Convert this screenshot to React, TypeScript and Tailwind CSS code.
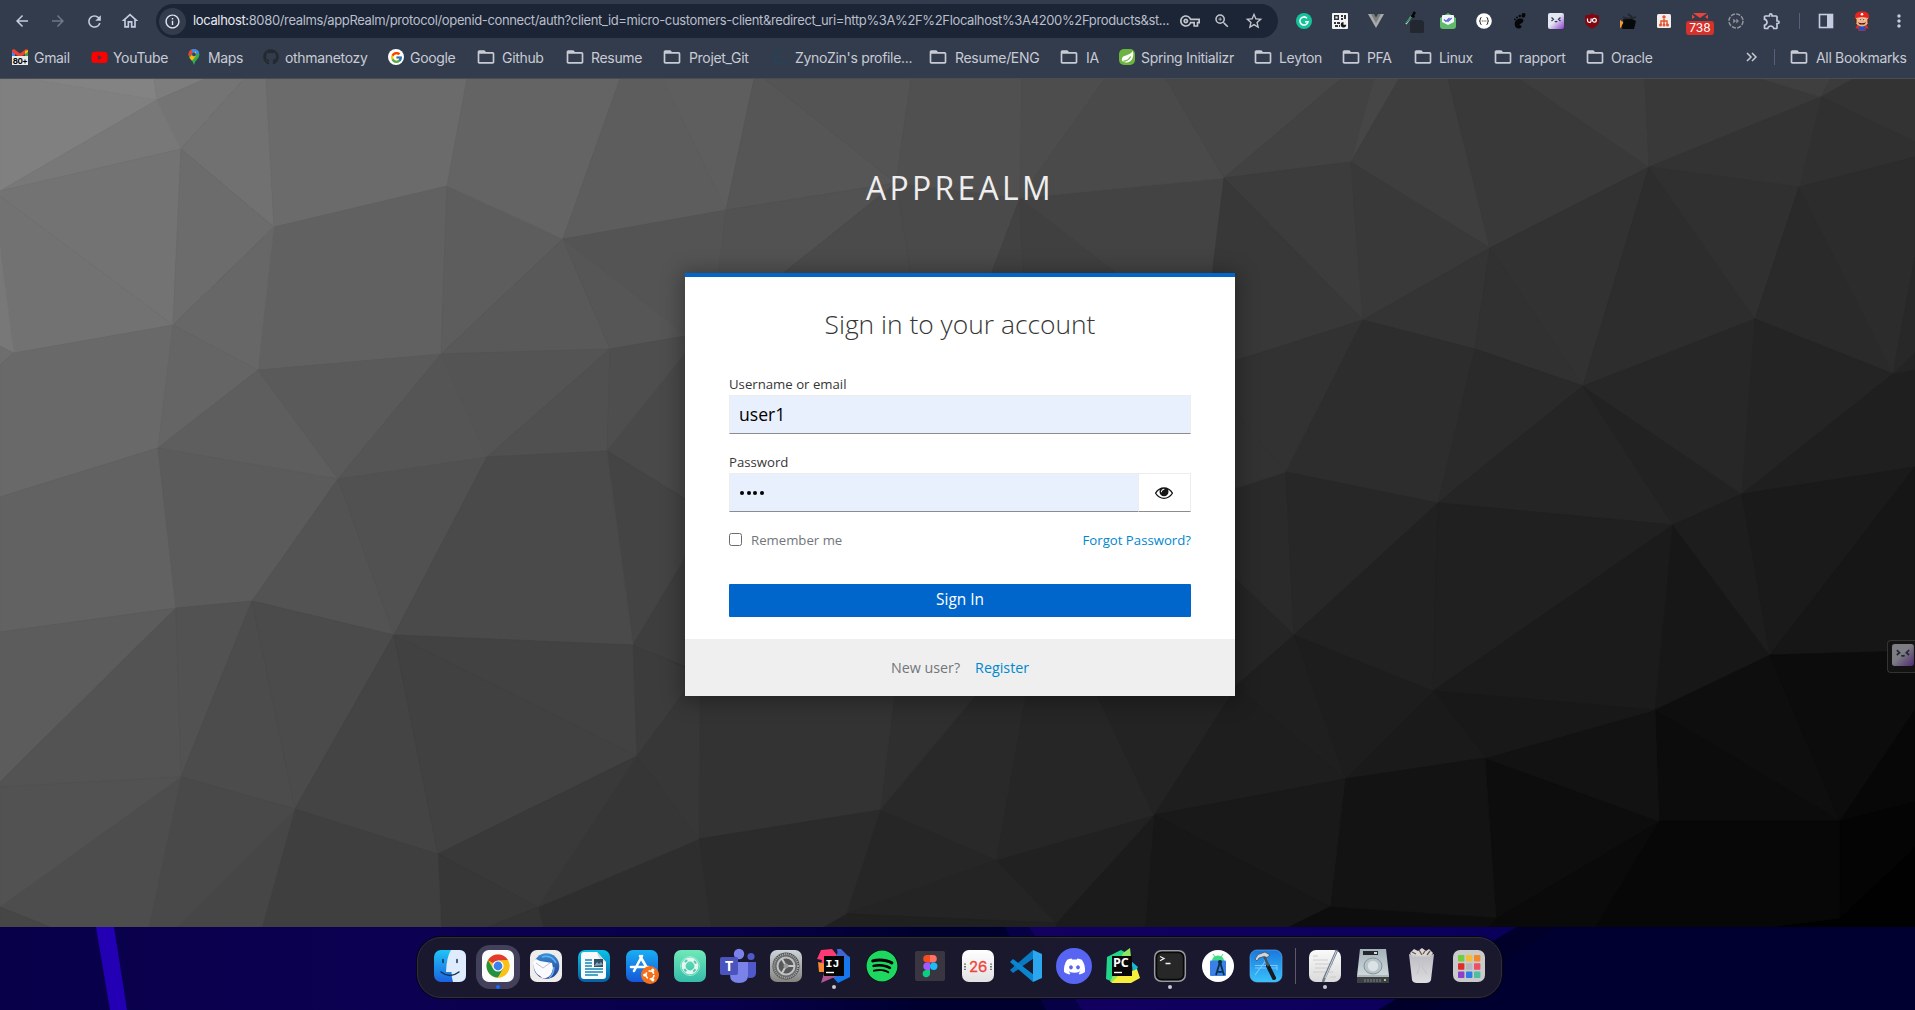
import React from "react";
import { FaDiscord, FaGithub, FaSpotify, FaYoutube } from "react-icons/fa";
import { FcGoogle } from "react-icons/fc";
import {
  MdArrowBack,
  MdArrowForward,
  MdFolderOpen,
  MdInfoOutline,
  MdMoreVert,
  MdOutlineExtension,
  MdOutlineHome,
  MdOutlineVpnKey,
  MdRefresh,
  MdStarBorder,
  MdZoomIn,
} from "react-icons/md";

/* ---------- low-poly backdrop: [grey level, polygon points] ---------- */
const FACES: [number, string][] = [
  [128, "0,79 31,79 157,100 0,191"],
  [131, "31,79 154,79 157,100"],
  [125, "154,79 205,79 157,100"],
  [116, "157,100 205,79 244,79 181,149"],
  [120, "0,191 157,100 181,149"],
  [115, "0,191 181,149 173,325 0,196"],
  [114, "0,196 173,325 14,353 0,247"],
  [120, "0,247 14,353 0,346"],
  [110, "0,346 14,353 0,365"],
  [113, "181,149 244,79 266,79 274,227"],
  [108, "181,149 274,227 173,325"],
  [107, "274,227 266,79 467,79 447,186"],
  [97, "274,227 447,186 441,354 258,370"],
  [93, "447,186 563,239 441,354"],
  [100, "447,186 467,79 620,79 563,239"],
  [93, "563,239 620,79 663,79 726,210"],
  [94, "726,210 663,79 754,79"],
  [86, "726,210 754,79 765,79 896,183"],
  [84, "765,79 911,79 896,183"],
  [103, "173,325 274,227 258,370"],
  [105, "0,365 14,353 173,325 158,448 0,497"],
  [101, "173,325 258,370 158,448"],
  [94, "158,448 258,370 338,479"],
  [90, "258,370 441,354 338,479"],
  [89, "563,239 441,354 610,349"],
  [86, "563,239 610,349 720,330"],
  [84, "563,239 726,210 718,360"],
  [82, "726,210 896,183 700,340 715,300"],
  [75, "896,183 700,340 920,330"],
  [74, "896,183 1020,198 970,330 920,330"],
  [80, "896,183 911,79 1022,79 1020,198"],
  [77, "1020,198 1022,79 1105,79"],
  [66, "1020,198 970,330 1025,330"],
  [64, "1020,198 1025,330 1190,330"],
  [67, "1020,198 1224,178 1235,353 1190,330"],
  [74, "1020,198 1105,79 1166,79 1224,178"],
  [71, "1166,79 1341,79 1224,178"],
  [66, "1224,178 1341,79 1374,79 1351,162"],
  [70, "1374,79 1399,79 1351,162"],
  [62, "1351,162 1399,79 1448,79 1490,248"],
  [57, "1448,79 1520,79 1649,167 1490,248"],
  [61, "1520,79 1645,79 1649,167"],
  [57, "1645,79 1762,79 1821,97 1649,167"],
  [63, "1762,79 1831,79 1821,97"],
  [59, "1831,79 1853,79 1821,97"],
  [51, "1821,97 1853,79 1915,79 1915,142"],
  [48, "1821,97 1915,142 1915,157 1799,187"],
  [51, "1649,167 1821,97 1799,187"],
  [60, "1224,178 1351,162 1363,320"],
  [57, "1351,162 1490,248 1363,320"],
  [56, "1224,178 1363,320 1200,372"],
  [50, "1200,372 1363,320 1286,472"],
  [52, "1490,248 1363,320 1475,349"],
  [49, "1490,248 1475,349 1583,386"],
  [50, "1490,248 1649,167 1583,386"],
  [45, "1649,167 1583,386 1755,319"],
  [48, "1649,167 1799,187 1755,319"],
  [42, "1799,187 1755,319 1893,374"],
  [44, "1799,187 1915,157 1915,257 1893,374"],
  [40, "1915,257 1893,374 1915,352"],
  [36, "1893,374 1915,352 1915,370"],
  [45, "1363,320 1475,349 1438,503 1286,472"],
  [42, "1475,349 1583,386 1438,503"],
  [37, "1583,386 1438,503 1673,525"],
  [34, "1583,386 1673,525 1742,494"],
  [39, "1583,386 1755,319 1742,494"],
  [36, "1755,319 1742,494 1893,374"],
  [31, "1893,374 1915,370 1915,467 1742,494"],
  [42, "1200,500 1286,472 1294,635 1200,545"],
  [50, "1200,372 1286,472 1200,500"],
  [39, "1286,472 1438,503 1294,635"],
  [33, "1438,503 1294,635 1433,691"],
  [32, "1438,503 1673,525 1433,691"],
  [27, "1673,525 1433,691 1655,710"],
  [23, "1673,525 1770,655 1655,710"],
  [29, "1673,525 1742,494 1770,655"],
  [26, "1742,494 1915,467 1770,655"],
  [22, "1915,467 1770,655 1915,651"],
  [14, "1655,710 1770,655 1840,821"],
  [12, "1655,710 1840,821 1659,821"],
  [12, "1770,655 1915,651 1915,710 1840,821"],
  [7, "1915,710 1840,821 1915,802"],
  [4, "1840,821 1915,802 1915,848 1840,918"],
  [1, "1840,918 1915,848 1915,927 1770,927"],
  [7, "1659,821 1840,821 1840,918 1770,927 1595,927"],
  [10, "1659,821 1595,927 1488,927 1496,918"],
  [13, "1485,758 1659,821 1496,918"],
  [18, "1485,758 1655,710 1659,821"],
  [24, "1433,691 1655,710 1485,758"],
  [26, "1433,691 1485,758 1345,779"],
  [29, "1294,635 1433,691 1345,779"],
  [37, "1200,545 1294,635 1236,686 1200,730"],
  [31, "1294,635 1236,686 1345,779"],
  [30, "1236,686 1345,779 1154,815"],
  [19, "1345,779 1485,758 1496,918 1330,907"],
  [25, "1345,779 1154,815 1330,907"],
  [23, "1154,815 1330,907 1289,927 1145,927"],
  [13, "1330,907 1496,918 1488,927 1289,927"],
  [27, "1154,815 1056,923 1056,927 1145,927"],
  [33, "1154,815 996,860 1056,923"],
  [38, "1027,686 1093,686 1154,815 996,860"],
  [35, "1093,686 1236,686 1154,815"],
  [41, "880,810 975,690 1027,686 996,860"],
  [38, "880,810 996,860 846,914"],
  [36, "996,860 1056,923 846,914"],
  [32, "846,914 1056,923 1056,927 823,927"],
  [47, "895,690 980,690 880,810"],
  [51, "700,690 895,690 880,810 699,839"],
  [43, "699,839 880,810 846,914 823,927 711,927"],
  [46, "699,839 711,927 543,927 538,907"],
  [85, "338,479 441,354 487,457"],
  [84, "441,354 610,349 487,457"],
  [80, "610,349 487,457 607,451"],
  [78, "610,349 720,330 607,451"],
  [73, "607,451 720,310 720,520"],
  [68, "607,451 720,520 633,645"],
  [62, "633,645 720,500 720,680"],
  [98, "0,497 158,448 176,608 0,632"],
  [91, "158,448 338,479 252,601 176,608"],
  [83, "338,479 252,601 394,635"],
  [81, "338,479 487,457 394,635"],
  [74, "487,457 607,451 633,645 394,635"],
  [92, "176,608 0,632 0,782"],
  [83, "176,608 0,782 0,787 181,777"],
  [82, "176,608 252,601 181,777"],
  [76, "252,601 181,777 295,809"],
  [75, "252,601 394,635 295,809"],
  [68, "394,635 295,809 438,854"],
  [65, "394,635 438,854 637,756"],
  [66, "394,635 633,645 637,756"],
  [60, "633,645 700,675 637,756"],
  [55, "637,756 700,670 699,839"],
  [54, "637,756 699,839 538,907"],
  [57, "438,854 637,756 538,907"],
  [55, "438,854 538,907 488,927 441,927"],
  [51, "538,907 543,927 488,927"],
  [63, "295,809 438,854 441,927 262,927"],
  [70, "295,809 262,927 177,927"],
  [73, "181,777 295,809 177,927 149,927"],
  [77, "181,777 149,927 50,927 0,907"],
  [82, "181,777 0,787 0,907"],
  [70, "0,907 50,927 0,927"],
];

function Backdrop() {
  return (
    <svg className="absolute inset-0" width="1915" height="848" viewBox="0 79 1915 848" aria-hidden="true">
      <rect x="0" y="79" width="1915" height="848" fill="#383838" />
      {FACES.map(([g, p], i) => (
        <polygon key={i} points={p} fill={`rgb(${g},${g},${g})`} stroke={`rgb(${g},${g},${g})`} strokeWidth="0.7" />
      ))}
    </svg>
  );
}

/* ---------- browser chrome ---------- */
function Cell({ children }: { children: React.ReactNode }) {
  return <div className="relative flex h-[34px] w-9 shrink-0 items-center justify-center">{children}</div>;
}

function GhostFace({ id }: { id: string }) {
  return (
    <svg width="16" height="16" viewBox="0 0 16 16">
      <defs>
        <linearGradient id={id} x1="0" y1="0" x2="1" y2="1">
          <stop offset="0.45" stopColor="#e4e8f2" />
          <stop offset="1" stopColor="#8d3fd0" />
        </linearGradient>
      </defs>
      <rect width="16" height="16" rx="2" fill={`url(#${id})`} />
      <path d="M3.5 4.5 5.5 6.3 3.5 8M12.5 4.5 10.5 6.3 12.5 8M6.8 8.2q1.2 1 2.4 0" stroke="#333b52" strokeWidth="1.2" fill="none" />
    </svg>
  );
}

function Extensions() {
  return (
    <div className="ml-[8px] flex items-center">
      <Cell>
        <svg width="16" height="16" viewBox="0 0 16 16">
          <circle cx="8" cy="8" r="8" fill="#15c39a" />
          <path d="M11 5.2A4.1 4.1 0 1 0 12 8.8H9" stroke="#fff" strokeWidth="1.5" fill="none" />
        </svg>
      </Cell>
      <Cell>
        <svg width="16" height="16" viewBox="0 0 16 16">
          <rect width="16" height="16" rx="1" fill="#f3f3f3" />
          <path d="M2 2h5v5H2zM3.4 3.4h2.2v2.2H3.4z" fill="#30343c" fillRule="evenodd" />
          <path d="M9 2h2v2H9zM12 2h2v4h-2zM9 5h2v2H9zM2 9h2v2H2zM5 9h3v2H5zM3 12h3v2H3zM7 12h1v2H7z" fill="#30343c" />
          <path d="M11.5 9a2.7 2.7 0 1 0 2.7 2.7h-2.7z" fill="#16191f" />
        </svg>
      </Cell>
      <Cell>
        <svg width="16" height="14" viewBox="0 0 16 14">
          <path d="M0 0h16L8 14z" fill="#a9a9a9" /><path d="M3 0h10L8 9z" fill="#7c7e81" /><path d="M6 0h4L8 3.5z" fill="#333c4d" />
        </svg>
      </Cell>
      <Cell>
        <svg className="ml-1" width="22" height="24" viewBox="0 0 22 24">
          <path d="M3 15 10 5" stroke="#dfe4e4" strokeWidth="1.4" />
          <path d="M3 14 9 7" stroke="#218a55" strokeWidth="1.2" />
          <path d="m8.5 6 3 2M8.5 8l3.5-5" stroke="#050505" strokeWidth="2.6" />
          <rect x="7" y="11" width="14" height="14" rx="3.5" fill="#23272f" />
        </svg>
      </Cell>
      <Cell>
        <svg width="16" height="16" viewBox="0 0 16 16">
          <path d="M0 5 8 0l8 5v8q0 3-3 3H3q-3 0-3-3z" fill="#5fbb6b" />
          <path d="M2 3q0-1 1-1h10q1 0 1 1v6l-6 3-6-3z" fill="#f4f5fb" />
          <path d="m4 6.5 2 2L9.5 5M7.5 8 8 8.5 11.7 5" stroke="#4f62d8" strokeWidth="1.2" fill="none" />
        </svg>
      </Cell>
      <Cell>
        <svg width="16" height="16" viewBox="0 0 16 16">
          <circle cx="8" cy="8" r="7.8" fill="#fff" />
          <path d="M5.5 4.5Q4 4.5 4.3 6.2 4.5 8 3.3 8 4.5 8 4.3 9.8 4 11.5 5.5 11.5M10.5 4.5Q12 4.5 11.7 6.2 11.5 8 12.7 8 11.5 8 11.7 9.8 12 11.5 10.5 11.5" stroke="#222" fill="none" />
          <path d="M5.8 8h.9M7.6 8h.9M9.4 8h.9" stroke="#222" />
        </svg>
      </Cell>
      <Cell>
        <svg width="14" height="16" viewBox="0 0 14 16" fill="#050608">
          <path d="M8 5.5C4 5.5 1.5 8 1.7 11.5 1.9 14.5 4 16 6.5 15.5 9 15 9 12.7 7.3 12.3 6 12 6.5 11 8 10.5 11 9.5 11.5 5.5 8 5.5Z" />
          <ellipse cx="10.5" cy="2.3" rx="1.9" ry="2.4" transform="rotate(15 10.5 2.3)" />
          <circle cx="6.8" cy="3" r="1.2" /><circle cx="4" cy="4.4" r="1" /><circle cx="1.9" cy="6.4" r=".9" />
        </svg>
      </Cell>
      <Cell><GhostFace id="ghost-toolbar" /></Cell>
      <Cell>
        <svg width="16" height="16" viewBox="0 0 16 16">
          <path d="M8 .5Q11 2.5 15 2.5V8q0 4.5-7 7.8Q1 12.5 1 8V2.5Q5 2.5 8 .5Z" fill="#800610" />
          <path d="M3.5 5.5v2.3q0 1.5 1.8 1.5T7.1 7.8V5.5" stroke="#fff" strokeWidth="1.2" fill="none" />
          <circle cx="10.4" cy="7.3" r="1.9" stroke="#fff" strokeWidth="1.2" fill="none" />
        </svg>
      </Cell>
      <Cell>
        <svg width="18" height="16" viewBox="0 0 18 16">
          <path d="m1 7 6 4-6 4z" fill="#f59a2b" />
          <path d="M4 6q4 1 7-1l6 3-2 8H4q-2-1-1-4 2-2 1-6z" fill="#08090b" />
          <path d="M4 4q5 3 13 0M9 1l4 3" stroke="#24272c" strokeWidth="1.6" fill="none" />
        </svg>
      </Cell>
      <Cell>
        <svg width="14" height="14" viewBox="0 0 14 14">
          <rect width="14" height="14" rx="1.5" fill="#f2eeec" />
          <circle cx="7" cy="3" r="1.7" fill="#e8512e" />
          <path d="M7 5v6M4 11V7h6v4" stroke="#e8512e" strokeWidth="1.4" fill="none" />
          <circle cx="3.5" cy="11" r="1.5" fill="#e8512e" /><circle cx="7" cy="11" r="1.5" fill="#e8512e" /><circle cx="10.5" cy="11" r="1.5" fill="#e8512e" />
        </svg>
      </Cell>
      <Cell>
        <svg width="16" height="16" viewBox="0 0 16 16" className="mb-1">
          <path d="M1 2h14L8 7z" fill="#ea4438" />
          <path d="M0 3.5 3 6 0 8zM16 3.5 13 6l3 2z" fill="#ea4438" />
        </svg>
        <span className="absolute left-1 top-[17px] flex h-[14px] w-[28px] items-center justify-center rounded-[3px] bg-[#d7312c] text-[12px] leading-none text-white">738</span>
      </Cell>
      <Cell>
        <svg width="16" height="16" viewBox="0 0 16 16" fill="none" stroke="#94979d">
          <circle cx="8" cy="8" r="7" strokeWidth="1.5" strokeDasharray="4.2 1.3" />
          <path d="m5.5 6 2.2 2-2.2 2zM8.5 6l2.2 2-2.2 2z" fill="#94979d" strokeWidth=".4" />
        </svg>
      </Cell>
      <Cell><MdOutlineExtension size={20} color="#c5cbe0" /></Cell>
      <div className="ml-[9px] mr-[8px] h-4 w-px bg-[#56607a]" />
      <Cell>
        <svg width="16" height="16" viewBox="0 0 16 16">
          <rect x="1.5" y="1.5" width="13" height="13" stroke="#c5cbe0" strokeWidth="1.6" fill="none" />
          <path d="M9 1.5h5.5v13H9z" fill="#c5cbe0" />
        </svg>
      </Cell>
      <Cell>
        <svg width="18" height="20" viewBox="0 0 18 20">
          <path d="M4 14h10l1.500 3.500h-3V20h-7v-2.500h-3z" fill="#e62420" />
          <path d="M6 15h6v4.500H6z" fill="#1f52c7" />
          <ellipse cx="9" cy="9.5" rx="6.6" ry="6" fill="#f2b287" />
          <path d="M1.800 7.500Q1 .3 9 .3t7.200 7.200Q9 4.500 1.800 7.500Z" fill="#e3241f" />
          <circle cx="9" cy="3.2" r="1.3" fill="#fff" />
          <path d="M2.800 8v4M15.200 8v4" stroke="#512711" strokeWidth="1.5" />
          <circle cx="7" cy="8.5" r="1.1" fill="#fff" /><circle cx="11" cy="8.5" r="1.1" fill="#fff" />
          <circle cx="7.2" cy="8.6" r=".7" fill="#124" /><circle cx="10.8" cy="8.6" r=".7" fill="#124" />
          <path d="M4.800 11.300q4.200 2 8.400 0l-2 2.200H6.800z" fill="#3e1a0c" />
        </svg>
      </Cell>
      <Cell><MdMoreVert size={20} color="#c5cbe0" className="ml-px" /></Cell>
    </div>
  );
}

function GmailIcon() {
  return (
    <span className="relative block h-4 w-4">
      <svg width="16" height="9" viewBox="0 0 16 9" className="block">
        <path d="M0 1h3v8H0z" fill="#4285f4" /><path d="M13 1h3v8h-3z" fill="#34a853" />
        <path d="m0 1 2-1 6 4.5L14 0l2 1v2L8 8.500 0 3z" fill="#ea4335" />
        <path d="m13 2 3-1v2l-3 2z" fill="#fbbc04" />
      </svg>
      <span className="absolute left-0 top-[7px] flex h-[9px] w-4 items-center justify-center bg-[#e9e9e9] text-[8px] font-bold leading-none tracking-[-0.5px] text-black">80+</span>
    </span>
  );
}

function MapsIcon() {
  return (
    <svg width="16" height="16" viewBox="0 0 16 16">
      <defs>
        <clipPath id="pin"><path d="M8 0a5.4 5.4 0 0 1 5.4 5.5C13.4 9.5 9.5 10.5 8 16 6.5 10.5 2.6 9.5 2.6 5.5A5.4 5.4 0 0 1 8 0Z" /></clipPath>
      </defs>
      <g clipPath="url(#pin)">
        <path d="M0 0h16v16H0z" fill="#34a853" />
        <path d="M0 8 9 0H0z" fill="#ea4335" /><path d="m5 0 11 0v3L8 6z" fill="#4285f4" />
        <path d="M2 10 10 2v5l-5 6z" fill="#fbbc04" /><path d="m0 3 4-3 3 4-5 5z" fill="#ea4335" />
      </g>
      <circle cx="8" cy="5.4" r="1.9" fill="#23477f" />
    </svg>
  );
}

const FolderIcon = () => <MdFolderOpen size={20} color="#c8cbd4" className="shrink-0" />;
const SpringIcon = () => (
  <span className="flex h-4 w-4 items-center justify-center rounded-[5px] bg-[#6db33f]">
    <svg width="13" height="13" viewBox="0 0 12 12"><path d="M11 0c1 4 0 10-5.500 10.500C2 11 0 9 1 6.500 2 3.500 8 4.500 11 0Z" fill="#fff" /><path d="M2 9.500Q7 9 9 5" stroke="#6db33f" fill="none" /></svg>
  </span>
);
const ProfileIcon = () => (
  <svg width="16" height="16" viewBox="0 0 16 16" fill="none" stroke="#24435a"><path d="M8 2H3v12h5M3 8h4M10 14h4" strokeWidth="1.4" /></svg>
);

const BOOKMARKS: { label: string; width: string; icon: React.ReactNode; gap: string }[] = [
  { label: "Gmail", width: "w-[79px]", icon: <GmailIcon />, gap: "gap-1.5" },
  { label: "YouTube", width: "w-[95px]", icon: <FaYoutube size={17} color="#f00" className="shrink-0" />, gap: "gap-1.5" },
  { label: "Maps", width: "w-[77px]", icon: <MapsIcon />, gap: "gap-1.5" },
  { label: "othmanetozy", width: "w-[125px]", icon: <FaGithub size={16} color="#24292f" />, gap: "gap-1.5" },
  { label: "Google", width: "w-[90px]", icon: <span className="flex h-4 w-4 items-center justify-center rounded-full bg-white"><FcGoogle size={13} /></span>, gap: "gap-1.5" },
  { label: "Github", width: "w-[89px]", icon: <FolderIcon />, gap: "gap-2" },
  { label: "Resume", width: "w-[97px]", icon: <FolderIcon />, gap: "gap-2" },
  { label: "Projet_Git", width: "w-[108px]", icon: <FolderIcon />, gap: "gap-[9px]" },
  { label: "ZynoZin's profile...", width: "w-[158px]", icon: <ProfileIcon />, gap: "gap-[7px]" },
  { label: "Resume/ENG", width: "w-[131px]", icon: <FolderIcon />, gap: "gap-[9px]" },
  { label: "IA", width: "w-[58px]", icon: <FolderIcon />, gap: "gap-[9px]" },
  { label: "Spring Initializr", width: "w-[136px]", icon: <SpringIcon />, gap: "gap-1.5" },
  { label: "Leyton", width: "w-[88px]", icon: <FolderIcon />, gap: "gap-2" },
  { label: "PFA", width: "w-[72px]", icon: <FolderIcon />, gap: "gap-2" },
  { label: "Linux", width: "w-[80px]", icon: <FolderIcon />, gap: "gap-2" },
  { label: "rapport", width: "w-[92px]", icon: <FolderIcon />, gap: "gap-2" },
  { label: "Oracle", width: "w-[90px]", icon: <FolderIcon />, gap: "gap-2" },
];

function Browser() {
  return (
    <header className="flex h-[79px] shrink-0 flex-col border-b border-[#4a4d54] bg-[#333c4d] pt-1 font-[Inter,sans-serif] text-[#c8cbd4]">
      <div className="flex h-[34px] items-center pl-1">
        <Cell><MdArrowBack size={18} color="#c5cbe0" /></Cell>
        <Cell><MdArrowForward size={18} color="#6f7788" /></Cell>
        <Cell><MdRefresh size={19} color="#c5cbe0" /></Cell>
        <Cell><MdOutlineHome size={20} color="#c5cbe0" /></Cell>
        <div className="ml-[8px] flex h-[34px] w-[1122px] shrink-0 items-center rounded-full bg-[#1c2536] pl-[3px]">
          <span className="flex h-[27px] w-[27px] items-center justify-center rounded-full bg-[#333c4d]">
            <MdInfoOutline size={17} color="#e3e6ee" />
          </span>
          <span className="ml-[7px] w-[982px] whitespace-nowrap text-[13px] tracking-[-0.36px] text-[#b9bfca]">
            <span className="text-[#e6e9f0]">localhost:</span>8080/realms/appRealm/protocol/openid-connect/auth?client_id=micro-customers-client&amp;redirect_uri=http%3A%2F%2Flocalhost%3A4200%2Fproducts&amp;st...
          </span>
          <div className="ml-[5px] flex items-center gap-[13px] text-[#c3c6cd]">
            <MdOutlineVpnKey size={20} />
            <MdZoomIn size={18} />
            <MdStarBorder size={20} />
          </div>
        </div>
        <Extensions />
      </div>
      <nav className="flex h-[38px] items-center whitespace-nowrap pl-3 text-[14px] tracking-[-0.32px]">
        {BOOKMARKS.map((b) => (
          <div key={b.label} className={`flex shrink-0 items-center ${b.width} ${b.gap}`}>
            <span className="flex w-4 shrink-0 justify-center">{b.icon}</span>
            <span>{b.label}</span>
          </div>
        ))}
        <svg className="ml-[69px]" width="11" height="10" viewBox="0 0 11 10" fill="none" stroke="#c8cbd4" strokeWidth="1.5"><path d="m1 1 4 4-4 4M6 1l4 4-4 4" /></svg>
        <div className="ml-[17px] h-4 w-px bg-[#56607a]" />
        <div className="ml-4 flex items-center gap-[9px]">
          <span className="flex w-4 shrink-0 justify-center"><FolderIcon /></span>
          <span>All Bookmarks</span>
        </div>
      </nav>
    </header>
  );
}

/* ---------- sign-in form ---------- */
function LoginCard() {
  return (
    <section className="flex w-[550px] flex-col border-t-4 border-[#0066cc] bg-white shadow-[0_2px_20px_3px_rgba(0,0,0,0.32)]">
      <h1 className="mt-[29px] text-center text-[26.4px] font-light leading-9 text-[#363636]">Sign in to your account</h1>
      <form className="mt-[33px] flex flex-col px-[44px]">
        <label className="mb-[2px] text-[13.2px] leading-[18px] text-[#363636]">Username or email</label>
        <div className="flex h-[39px] items-center border border-[#ededed] border-b-[#8a8d90] bg-[#e8effd] px-[9px] text-[17.6px] text-black">user1</div>
        <label className="mb-[2px] mt-[19px] text-[13.2px] leading-[18px] text-[#363636]">Password</label>
        <div className="flex h-[39px]">
          <div className="flex flex-1 items-center gap-[2.6px] border border-r-0 border-[#ededed] border-b-[#8a8d90] bg-[#e8effd] pl-[10px]">
            <i className="h-[4px] w-[4px] rounded-full bg-black" />
            <i className="h-[4px] w-[4px] rounded-full bg-black" />
            <i className="h-[4px] w-[4px] rounded-full bg-black" />
            <i className="h-[4px] w-[4px] rounded-full bg-black" />
          </div>
          <div className="flex w-[53px] items-center justify-center border border-[#ededed] border-b-[#8a8d90] pr-px">
            <svg width="18" height="13" viewBox="0 0 1792 1280" fill="#151515">
              <path d="M1664 704q-152-236-381-353 61 104 61 225 0 185-131.500 316.500T896 1024 579.500 892.500 448 576q0-121 61-225-229 117-381 353 133 205 333.500 326.500T896 1152t434.500-121.500T1664 704zM944 320q0-20-14-34t-34-14q-125 0-214.500 89.500T592 576q0 20 14 34t34 14 34-14 14-34q0-86 61-147t147-61q20 0 34-14t14-34zM1792 704q0 34-20 69-140 230-376.500 368.500T896 1280 396.500 1141 20 773Q0 738 0 704t20-69q140-229 376.500-368T896 128t499.500 139T1772 635q20 35 20 69z" />
            </svg>
          </div>
        </div>
        <div className="mb-px mt-[18px] flex items-center justify-between text-[13.2px] leading-5">
          <span className="flex items-center gap-[9px] text-[#72767b]">
            <span className="mb-px h-[13px] w-[13px] rounded-[2.5px] border border-[#6b6b6b] bg-white" />
            Remember me
          </span>
          <a className="text-[#0088ce]">Forgot Password?</a>
        </div>
        <div className="mt-[33px] flex h-[33px] justify-center rounded-[1px] bg-[#0066cc] pt-1 text-[15.4px] leading-6 text-white">Sign In</div>
      </form>
      <footer className="mt-[22px] flex h-[57px] items-center justify-center gap-[15px] bg-[#efefef] text-[14.3px]">
        <span className="text-[#72767b]">New user?</span>
        <a className="text-[#0088ce]">Register</a>
      </footer>
    </section>
  );
}

/* ---------- dock ---------- */
function Tile({ children, dot }: { children: React.ReactNode; dot?: string }) {
  return (
    <div className="relative flex h-full w-12 shrink-0 items-center justify-center">
      {children}
      {dot && <span className={`absolute bottom-[8px] left-[22px] z-10 h-1 w-1 rounded-full ${dot}`} />}
    </div>
  );
}

function Icon({ children }: { children: React.ReactNode }) {
  return <svg width="36" height="36" viewBox="0 0 36 36" className="relative mb-[3px] overflow-visible">{children}</svg>;
}

function Gradient({ id, from, to }: { id: string; from: string; to: string }) {
  return (
    <defs>
      <linearGradient id={id} x1="0" y1="0" x2="0" y2="1"><stop stopColor={from} /><stop offset="1" stopColor={to} /></linearGradient>
    </defs>
  );
}

const PAD_COLORS = ["#6fcf3f", "#f4bd35", "#f08a2c", "#dc2f2a", "#b5b8bf", "#ee4e68", "#8b40c9", "#2d7be8", "#4cc0a0"];

function Dock() {
  return (
    <div className="relative flex h-[61px] items-center rounded-[24px] border border-[#302e3a] bg-[#1b192c]/95 px-2 shadow-[0_0_0_1px_#07060f]">
      <Tile>
        <Icon>
          <Gradient id="finder" from="#20c4f8" to="#1b62e0" />
          <rect x="2" y="2" width="32" height="32" rx="7" fill="url(#finder)" />
          <path d="M19 2h8q7 0 7 7v18q0 7-7 7h-6q-1.5-5-1.5-10H14Q14.5 9 19 2Z" fill="#dfecfd" />
          <path d="M11 11.5v3M25 11.5v3M9 24q9 7 18 0" stroke="#143251" strokeWidth="1.5" fill="none" strokeLinecap="round" />
        </Icon>
      </Tile>
      <Tile dot="bg-[#1769ff]">
        <span className="absolute left-[2px] top-[7px] h-11 w-11 rounded-[14px] bg-[#42405a]" />
        <Icon>
          <rect x="2" y="2" width="32" height="32" rx="7" fill="#fbfcfd" />
          <circle cx="18" cy="18" r="11.5" fill="#fbc116" />
          <path d="M18 18 8 12.3A11.5 11.5 0 0 1 28 12.3H18z" fill="#e33b2e" />
          <path d="M8 12.3A11.5 11.5 0 0 0 18 29.5L23 21 18 18 13 20.5z" fill="#229342" />
          <path d="M28 12.3A11.5 11.5 0 0 1 18 29.5L23 21 22 12.3z" fill="#fbc116" />
          <circle cx="18" cy="18" r="5.6" fill="#fff" /><circle cx="18" cy="18" r="4.4" fill="#3b82ec" />
        </Icon>
      </Tile>
      <Tile>
        <Icon>
          <Gradient id="bird" from="#3a8fd6" to="#27358f" />
          <rect x="2" y="2" width="32" height="32" rx="7" fill="#eeedec" />
          <circle cx="18.5" cy="18" r="12.8" fill="url(#bird)" />
          <path d="m5 14 3-3 4 2 12 2 1 5q-1 8-7 10-4 1-6-2-5-3-6-8z" fill="#fbfbff" />
          <path d="m8 15 7 5 7-5" stroke="#b9c2da" fill="none" />
          <path d="M14 9q9-3 14 6M21 30q5-4 5-11" stroke="#5fb4f0" strokeWidth="1.5" fill="none" />
        </Icon>
      </Tile>
      <Tile>
        <Icon>
          <Gradient id="writer" from="#08c3e8" to="#0860a5" />
          <rect x="2" y="2" width="32" height="32" rx="7" fill="url(#writer)" />
          <path d="M8 4h13l9 10v14q0 3-3 3H8q-3 0-3-3V7q0-3 3-3Z" fill="#f8f9fa" />
          <path d="M21 4q1 8 9 10z" fill="#d2d7da" />
          <path d="M9 12h7M9 15h7M9 18h7M9 21h18M9 24h18M9 27h13" stroke="#1585b8" strokeWidth="1.6" />
          <path d="M18 11h9v8h-9z" fill="#304f64" /><path d="m18 18 3-4 2 2 2-2 2 3" fill="#7fa5b7" />
        </Icon>
      </Tile>
      <Tile>
        <Icon>
          <Gradient id="store" from="#19aef3" to="#1656d9" />
          <rect x="2" y="2" width="32" height="32" rx="7" fill="url(#store)" />
          <path d="m18 8-8 15M16 8l7 12M7 19h17" stroke="#fff" strokeWidth="2.6" strokeLinecap="round" />
          <circle cx="26" cy="27" r="9" fill="#f3701b" />
          <g fill="none" stroke="#fff" strokeWidth="1.6">
            <circle cx="26" cy="27" r="4" strokeDasharray="6.4 2" /><circle cx="20.7" cy="27" r=".8" /><circle cx="28.8" cy="22.2" r=".8" /><circle cx="28.8" cy="31.8" r=".8" />
          </g>
        </Icon>
      </Tile>
      <Tile>
        <Icon>
          <Gradient id="help" from="#70e9b8" to="#35bba9" />
          <rect x="2" y="2" width="32" height="32" rx="7" fill="url(#help)" />
          <circle cx="18" cy="18" r="9.5" stroke="#8eeed0" fill="none" />
          <circle cx="18" cy="18" r="6.4" stroke="#e6f5ef" strokeWidth="4" fill="none" />
          <circle cx="18" cy="18" r="6.4" stroke="#51c9ae" strokeWidth="2" fill="none" strokeDasharray="3 7.053" strokeDashoffset="-3.5" />
        </Icon>
      </Tile>
      <Tile>
        <Icon>
          <circle cx="19" cy="6" r="5.2" fill="#7b83eb" /><circle cx="31" cy="8.5" r="3.6" fill="#5059c9" />
          <path d="M25 14h11v11q0 5-6 5-5 0-5-5z" fill="#5059c9" />
          <path d="M10 14h18v13q0 8-9 8t-9-8z" fill="#7b83eb" />
          <rect x="0" y="9" width="18" height="18" rx="2" fill="#4b53bc" />
          <text x="9" y="23" textAnchor="middle" fill="#fff" fontFamily="Open Sans" fontWeight="700" fontSize="14">T</text>
        </Icon>
      </Tile>
      <Tile>
        <Icon>
          <Gradient id="gear" from="#cdd5da" to="#85837d" />
          <rect x="2" y="2" width="32" height="32" rx="7" fill="url(#gear)" />
          <circle cx="18" cy="18" r="13.5" fill="#4c4d4e" /><circle cx="18" cy="18" r="12" stroke="#a8aaaa" fill="#696b6c" strokeDasharray="1 1" strokeWidth="2" />
          <circle cx="18" cy="18" r="8.5" stroke="#bfc1c1" strokeWidth="2" fill="#565859" />
          <path d="m18 18 9 0M18 18l-4.5-8M18 18l-4.5 8" stroke="#c7c8c8" strokeWidth="2" /><circle cx="18" cy="18" r="2.5" fill="#999" />
        </Icon>
      </Tile>
      <Tile dot="bg-[#c9c9cf]">
        <Icon>
          <path d="m5 2 11-1 5 6-11 20-6-7 2-8-5-1z" fill="#fc3972" /><path d="m2 14 8 2v8l-7 0z" fill="#f58a35" />
          <path d="m23 1 6 6 5 2 0 20-12 6-8-9z" fill="#1677ed" /><path d="m9 22 12 6-16 7z" fill="#b05593" /><path d="M21 1h4l8 8-10 4z" fill="#4166cf" />
          <rect x="8" y="8" width="20" height="20" fill="#050505" />
          <text x="9.5" y="18.5" fill="#fff" fontFamily="Liberation Mono" fontWeight="700" fontSize="11.5">IJ</text>
          <path d="M10 24.5h8" stroke="#fff" strokeWidth="1.4" />
        </Icon>
      </Tile>
      <Tile><span className="mb-[3px] rounded-full bg-black"><FaSpotify size={32} color="#1ed760" /></span></Tile>
      <Tile>
        <Icon>
          <rect x="3" y="3" width="30" height="30" rx="2" fill="#393642" />
          <path d="M18 7h-3a3.8 3.8 0 0 0 0 7.6h3z" fill="#f24e1e" /><path d="M18 7h3a3.8 3.8 0 0 1 0 7.6h-3z" fill="#ff7262" />
          <path d="M18 14.6h-3a3.7 3.7 0 0 0 0 7.4h3z" fill="#a259ff" /><circle cx="21.7" cy="18.3" r="3.7" fill="#1abcfe" />
          <path d="M18 22h-3a3.7 3.7 0 1 0 3 3.7z" fill="#0acf83" />
        </Icon>
      </Tile>
      <Tile>
        <Icon>
          <Gradient id="cal" from="#ffffff" to="#e2e2e2" />
          <rect x="2" y="2" width="32" height="32" rx="7" fill="url(#cal)" />
          <text x="18" y="23.5" textAnchor="middle" fill="#f0443c" stroke="#f0443c" strokeWidth=".3" fontFamily="Inter" fontSize="15" letterSpacing="-0.3">26</text>
          <path d="M5 15.500v6.500M31 15.500v6.500" stroke="#333" strokeWidth="1.3" strokeDasharray="1.3 1.3" />
        </Icon>
      </Tile>
      <Tile>
        <Icon>
          <path d="m25 2 9 4v24l-9 4z" fill="#2ba7f0" /><path d="M25 2 2 22l3 3 20-14z" fill="#0a78c2" /><path d="M2 14l3-3 20 15v8z" fill="#0a86d1" /><path d="M25 11 15 18l10 8z" fill="#1b192c" />
        </Icon>
      </Tile>
      <Tile><span className="mb-[3px] flex h-9 w-9 items-center justify-center rounded-full bg-[#5865f2]"><FaDiscord size={23} color="#fff" /></span></Tile>
      <Tile>
        <Icon>
          <path d="M3 9 17 2l9 5-15 28-9-4z" fill="#22d58c" /><path d="m19 5 7-5 1 9 2 18-3 7-20 0z" fill="#8fe85c" />
          <path d="m27 13 7 6-4 8z" fill="#13bad8" /><path d="m26 24 7-3 3 9-9 5-20 0 7-7z" fill="#f6ee3b" />
          <rect x="8" y="8" width="20" height="20" fill="#080808" />
          <text x="9" y="18.5" fill="#fff" fontFamily="Open Sans" fontWeight="700" fontSize="12.5">PC</text>
          <path d="M10 24.5h8" stroke="#fff" strokeWidth="1.4" />
        </Icon>
      </Tile>
      <Tile dot="bg-[#c9c9cf]">
        <Icon>
          <rect x="2.7" y="2.7" width="30.6" height="30.6" rx="6.5" fill="#272727" stroke="#969a9c" strokeWidth="1.5" />
          <rect x="4.5" y="4.5" width="27" height="27" rx="5" stroke="#080808" strokeWidth="1.5" fill="none" />
          <path d="m8 8.500 4 2-4 2.200M13.500 15.500h5" stroke="#f2f2f2" strokeWidth="1.3" fill="none" />
        </Icon>
      </Tile>
      <Tile>
        <Icon>
          <circle cx="18" cy="18" r="16" fill="#fff" />
          <path d="M12 13a6 5.5 0 0 1 12 0z" fill="#3ddc84" /><path d="m13 6 2 3M23 6l-2 3" stroke="#3ddc84" />
          <rect x="10" y="12.5" width="16" height="15.5" rx="1" fill="#3c7fe8" />
          <path d="m20 14-4 13M20 14l4 13M16.5 23q3.5 2 7 0" stroke="#083042" strokeWidth="1.8" fill="none" /><circle cx="20" cy="14" r="2" fill="#083042" />
        </Icon>
      </Tile>
      <Tile>
        <Icon>
          <Gradient id="xcode" from="#1978df" to="#38c2fb" />
          <rect x="2" y="2" width="32" height="32" rx="7" fill="url(#xcode)" stroke="#67b7f2" strokeWidth=".6" />
          <path d="m19 11-12 16M16 11l8 15M7 20h22M7 17.5h22v5" stroke="#7cc8ff" strokeWidth="1.1" fill="none" />
          <path d="m20 18 6 12" stroke="#171a20" strokeWidth="4" strokeLinecap="round" /><path d="m16.5 9 4 9" stroke="#4a505a" strokeWidth="2.6" />
          <path d="M7 11 10 6.500 17 4l5 3-3 2.500-3-1-5 1.500-2 3z" fill="#cfd4da" stroke="#3d4651" strokeWidth=".7" />
        </Icon>
      </Tile>
      <div className="flex h-full w-[11px] shrink-0 items-center justify-center"><span className="mb-[3px] h-9 w-px bg-[#5b5967]" /></div>
      <Tile dot="bg-[#c9c9cf]">
        <Icon>
          <Gradient id="note" from="#fafafa" to="#dadada" />
          <rect x="2" y="2" width="32" height="32" rx="7" fill="url(#note)" />
          <path d="M6 8h5M6 12h15M8 16h18M8 20h13M6 24h20M23 29h6" stroke="#c6c6c6" strokeWidth=".8" />
          <path d="M30 2 17 31l-1 3" stroke="#6d7a88" strokeWidth="2.6" /><path d="M29.5 3 18 30" stroke="#c8d4e0" strokeWidth="1" />
        </Icon>
      </Tile>
      <Tile>
        <Icon>
          <Gradient id="disk" from="#a3b2b9" to="#d0d9dc" />
          <path d="M5 1h26l3 27H2z" fill="url(#disk)" /><path d="M2 29h32v6H2z" fill="#3c4043" /><path d="M2 27h32v2H2z" fill="#aeb8bc" />
          <path d="M8 3h15v4H8z" fill="#24282c" /><path d="M19 4h3v2h-3z" fill="#d4dadd" />
          <ellipse cx="18" cy="18" rx="9" ry="8" fill="#b7c4c9" stroke="#82939b" /><circle cx="18" cy="18" r="5.2" fill="#dce3e6" />
          <path d="M10 31v3M13 31v3M16 31v3M19 31v3M22 31v3M25 31v3" stroke="#7d8488" /><circle cx="30" cy="32" r="1" fill="#c7f29e" />
        </Icon>
      </Tile>
      <Tile>
        <Icon>
          <Gradient id="bin" from="#c4c4ca" to="#e8e8ea" />
          <path d="m7 5 4-4 4 2 4-3 4 3 3-2 4 4-3 4H9z" fill="#d9d8d6" /><path d="m9 4 4 2M16 2l3 5M22 3l-2 3M27 3l-3 4" stroke="#71534a" strokeWidth="1.3" />
          <path d="M6 6q12 4 25 0l-3 26q-1 3-5 3h-9q-4 0-5-3z" fill="url(#bin)" opacity=".95" />
          <path d="m12 12 5 5-3 9M23 11l-4 8 5 7" stroke="#c3c3c8" fill="none" />
        </Icon>
      </Tile>
      <Tile>
        <Icon>
          <rect x="2" y="2" width="32" height="32" rx="7" fill="#cacaca" />
          {PAD_COLORS.map((c, i) => (
            <rect key={c} x={7 + (i % 3) * 8} y={7 + Math.floor(i / 3) * 8.3} width="6.4" height="6.4" rx=".8" fill={c} />
          ))}
        </Icon>
      </Tile>
    </div>
  );
}

function Desktop() {
  return (
    <div className="relative flex h-[83px] shrink-0 justify-center overflow-hidden bg-[#0b004f] pl-1 pt-[10px]">
      <svg className="absolute inset-0" width="1915" height="83" viewBox="0 0 1915 83" aria-hidden="true">
        <defs>
          <linearGradient id="wall" x1="0" x2="1"><stop stopColor="#080049" /><stop offset=".2" stopColor="#0c0052" /><stop offset=".38" stopColor="#08004a" /><stop offset=".48" stopColor="#00002f" /><stop offset="1" stopColor="#000030" /></linearGradient>
          <linearGradient id="beam" x1="0" x2="1"><stop stopColor="#130060" /><stop offset="1" stopColor="#09005a" /></linearGradient>
        </defs>
        <path d="M0 0h1915v83H0z" fill="url(#wall)" />
        <path d="M96 0h18l13 83h-17z" fill="#2400b5" />
        <path d="M1005 0h24l53 83h-36z" fill="#060046" />
        <path d="M1029 0h488l-139 83h-296z" fill="url(#beam)" />
        <path d="M1517 0h38l-125 83h-52z" fill="#00002b" />
      </svg>
      <Dock />
    </div>
  );
}

export default function App() {
  return (
    <div className="flex h-[1010px] w-[1915px] flex-col overflow-hidden bg-black">
      <Browser />
      <main className="relative flex h-[848px] shrink-0 flex-col items-center overflow-hidden font-['Open_Sans',sans-serif]">
        <Backdrop />
        <div className="relative flex flex-col items-center pl-[5px]">
          <div className="mt-[87px] h-[44px] text-[31.9px] leading-[44px] tracking-[3.3px] text-[#eeeeee]">APPREALM</div>
          <div className="mt-[63px]"><LoginCard /></div>
        </div>
        <div className="absolute right-0 top-[561px] flex h-[33px] w-7 items-center rounded-l-[4px] border border-r-0 border-[#333] bg-[#131313] pb-[3px] pl-1">
          <span className="flex origin-left scale-[1.37] opacity-50"><GhostFace id="ghost-side" /></span>
        </div>
      </main>
      <Desktop />
    </div>
  );
}
